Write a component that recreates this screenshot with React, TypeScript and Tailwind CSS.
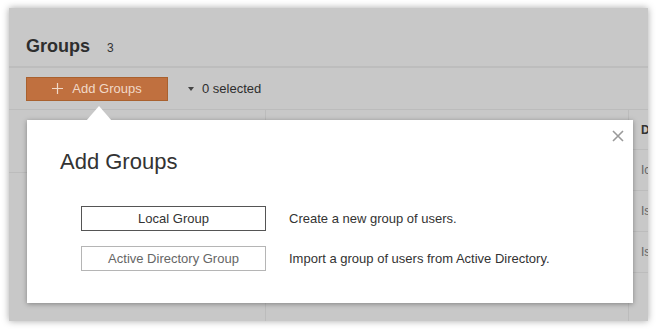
import React from 'react';

const font = { fontFamily: '"Liberation Sans", Arial, sans-serif' };

function CloseIcon() {
  return (
    <svg width="12" height="12" viewBox="0 0 12 12" aria-hidden>
      <path d="M1 1L11 11M11 1L1 11" stroke="#9a9a9a" strokeWidth="1.6" />
    </svg>
  );
}

function PlusIcon() {
  return (
    <svg width="11" height="11" viewBox="0 0 11 11" aria-hidden>
      <path d="M5.5 0V11M0 5.5H11" stroke="#f1d9c8" strokeWidth="1.2" />
    </svg>
  );
}

const sideRows = ['Ic', 'Is', 'Is'];

export default function App() {
  return (
    <div className="h-[329px] w-[656px] bg-white pt-2 pl-[9px]" style={font}>
      <div className="relative flex h-[313px] w-[639px] flex-col overflow-hidden bg-[#c8c8c8] shadow-[0_0_7px_rgba(0,0,0,0.35)]">
        {/* header */}
        <div className="flex h-[60px] items-baseline gap-[17px] border-b-2 border-[#bdbdbd] pt-[25px] pl-[17px]">
          <h1 className="text-[18px] font-bold text-[#2e2e2e]">Groups</h1>
          <span className="text-[12px] text-[#333]">3</span>
        </div>

        {/* toolbar */}
        <div className="flex h-[42px] items-center gap-5 border-b border-[#bcbcbc] pl-[17px]">
          <button className="flex h-6 w-[142px] items-center justify-center gap-[9px] border border-[#a9612f] bg-[#c0703f] text-[13px] text-[#f1d9c8]">
            <PlusIcon />
            Add Groups
          </button>
          <div className="flex items-center gap-2 text-[13px] text-[#2e2e2e]">
            <span className="h-0 w-0 border-x-[3px] border-t-[4px] border-x-transparent border-t-[#444]" />
            0 selected
          </div>
        </div>

        {/* table */}
        <div className="flex flex-1">
          <div className="w-[257px] shrink-0 border-r border-[#bcbcbc]">
            <div className="h-[63px] border-b border-[#bcbcbc]" />
          </div>
          <div className="w-[363px] shrink-0 border-r border-[#bcbcbc]" />
          <div className="min-w-0 flex-1 overflow-hidden">
            <div className="flex h-[40px] items-center border-b border-[#bcbcbc] pl-[12px] text-[12px] font-bold whitespace-nowrap text-[#333]">
              D
            </div>
            {sideRows.map((r, i) => (
              <div
                key={i}
                className="flex h-[41px] items-center border-b border-[#bcbcbc] pl-[12px] text-[12px] whitespace-nowrap text-[#666]"
              >
                {r}
              </div>
            ))}
          </div>
        </div>

        {/* popover */}
        <div className="absolute top-[112px] left-[18px] h-[183px] w-[606px] bg-white shadow-[0_1px_5px_rgba(0,0,0,0.35)]">
          <svg className="absolute -top-[15px] left-[59px]" width="26" height="16" viewBox="0 0 26 16" aria-hidden>
            <path d="M0 16L13 1L26 16Z" fill="#ffffff" />
          </svg>
          <button className="absolute top-[10px] right-[9px]">
            <CloseIcon />
          </button>
          <h2 className="pt-[27px] pl-[33px] text-[22px] leading-[30px] font-normal text-[#333]">Add Groups</h2>
          <div className="mt-[29px] flex flex-col gap-[15px] pl-[54px]">
            <div className="flex items-center gap-[23px]">
              <button className="h-[25px] w-[185px] border border-[#555] bg-white text-[13px] text-[#333]">
                Local Group
              </button>
              <span className="text-[13px] text-[#333]">Create a new group of users.</span>
            </div>
            <div className="flex items-center gap-[23px]">
              <button className="h-[25px] w-[185px] border border-[#b5b5b5] bg-white text-[13px] text-[#666]">
                Active Directory Group
              </button>
              <span className="text-[13px] text-[#333]">Import a group of users from Active Directory.</span>
            </div>
          </div>
        </div>
      </div>
    </div>
  );
}
